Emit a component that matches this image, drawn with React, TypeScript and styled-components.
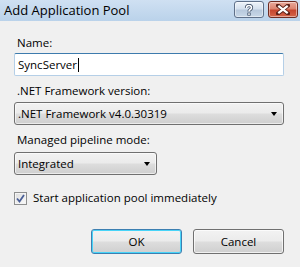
import React from "react";
import styled, { createGlobalStyle } from "styled-components";

const GlobalStyle = createGlobalStyle`
  html, body {
    margin: 0;
    padding: 0;
    background: #f0f0f0;
  }
  * {
    box-sizing: border-box;
  }
`;

const Window = styled.div`
  width: 300px;
  height: 267px;
  background: #f0f0f0;
  font-family: "Open Sans", "Noto Sans", sans-serif;
  font-size: 11.5px;
  color: #000;
  display: flex;
  flex-direction: column;
  overflow: hidden;
`;

const TitleBar = styled.div`
  height: 21px;
  flex: none;
  display: flex;
  align-items: flex-start;
  justify-content: space-between;
  padding: 1px 2px 0 4px;
  background: linear-gradient(#cfe0f2, #bad2ea);
`;

const Title = styled.div`
  font-size: 13px;
  line-height: 18px;
  color: #000;
`;

const Caption = styled.div`
  display: flex;
  gap: 4px;
`;

const CaptionButton = styled.div<{ $close?: boolean }>`
  width: 30px;
  height: 17px;
  border: 1px solid ${({ $close }) => ($close ? "#6e2b22" : "#5f7089")};
  border-radius: 3px;
  display: flex;
  align-items: center;
  justify-content: center;
  background: ${({ $close }) =>
    $close
      ? "linear-gradient(#e9a99b 0%, #dc8470 45%, #c6452e 55%, #d4654a 100%)"
      : "linear-gradient(#eef3f9 0%, #d5e1ee 45%, #b8c9dd 55%, #c9d8e8 100%)"};
  box-shadow: inset 0 0 0 1px rgba(255, 255, 255, 0.45);
`;

const Body = styled.div`
  display: flex;
  flex-direction: column;
  padding: 14px 16px 0 14px;
`;

const Label = styled.div<{ $gap?: number; $after?: number }>`
  line-height: 16px;
  padding-left: 3px;
  margin-top: ${({ $gap }) => $gap ?? 0}px;
  margin-bottom: ${({ $after }) => $after ?? 2}px;
`;

const TextBox = styled.div`
  height: 23px;
  width: 270px;
  background: #fff;
  border: 1px solid #b5cfe7;
  border-top-color: #3d7bad;
  border-radius: 2px;
  padding: 0 3px;
  display: flex;
  align-items: center;
  line-height: 16px;
`;

const Caret = styled.span`
  display: inline-block;
  width: 1px;
  height: 14px;
  background: #000;
  margin-left: 1px;
`;

const Select = styled.div<{ $width: number }>`
  height: 23px;
  width: ${({ $width }) => $width}px;
  border: 1px solid #707070;
  border-radius: 3px;
  display: flex;
  align-items: center;
  justify-content: space-between;
  padding: 0 6px 0 3px;
  line-height: 16px;
  background: linear-gradient(#f2f2f2 0%, #ebebeb 48%, #dddddd 52%, #cfcfcf 100%);
  box-shadow: inset 0 0 0 1px rgba(255, 255, 255, 0.6);
`;

const Arrow = styled.span`
  width: 0;
  height: 0;
  border-left: 3.5px solid transparent;
  border-right: 3.5px solid transparent;
  border-top: 4px solid #000;
`;

const CheckRow = styled.label`
  display: flex;
  align-items: center;
  gap: 6px;
  margin-top: 15px;
  line-height: 16px;
`;

const CheckBox = styled.span`
  width: 13px;
  height: 13px;
  border: 1px solid #8e8f8f;
  background: linear-gradient(135deg, #dcdcdc, #fbfbfb);
  display: flex;
  align-items: center;
  justify-content: center;
  box-shadow: inset 0 0 0 1px #f4f4f4;
`;

const Buttons = styled.div`
  display: flex;
  justify-content: flex-end;
  gap: 11px;
  margin-top: 23px;
`;

const Button = styled.div<{ $default?: boolean }>`
  width: 91px;
  height: 25px;
  border: 1px solid ${({ $default }) => ($default ? "#3c7fb1" : "#707070")};
  border-radius: 3px;
  display: flex;
  align-items: center;
  justify-content: center;
  line-height: 16px;
  background: linear-gradient(#f2f2f2 0%, #ebebeb 48%, #dddddd 52%, #cfcfcf 100%);
  box-shadow: ${({ $default }) =>
    $default ? "inset 0 0 0 1px #48d4f8" : "inset 0 0 0 1px rgba(255,255,255,0.7)"};
`;

const HelpGlyph = () => (
  <svg width="12" height="12" viewBox="0 0 12 12">
    <path
      d="M3.5 4 Q3.5 1.5 6 1.5 Q8.5 1.5 8.5 3.8 Q8.5 5 7 5.8 Q6 6.4 6 7.5"
      fill="none"
      stroke="#3e4e66"
      strokeWidth="3.2"
    />
    <path
      d="M3.5 4 Q3.5 1.5 6 1.5 Q8.5 1.5 8.5 3.8 Q8.5 5 7 5.8 Q6 6.4 6 7.5"
      fill="none"
      stroke="#fff"
      strokeWidth="1.6"
    />
    <rect x="4.4" y="8.6" width="3.2" height="3" fill="#3e4e66" />
    <rect x="5.2" y="9.3" width="1.6" height="1.6" fill="#fff" />
  </svg>
);

const CloseGlyph = () => (
  <svg width="14" height="11" viewBox="0 0 14 11">
    <path d="M2 1.5 L12 9.5 M12 1.5 L2 9.5" stroke="#5a2018" strokeWidth="4" strokeLinecap="square" />
    <path d="M2.3 1.8 L11.7 9.2 M11.7 1.8 L2.3 9.2" stroke="#fff" strokeWidth="2.2" />
  </svg>
);

const CheckMark = () => (
  <svg width="9" height="9" viewBox="0 0 9 9">
    <path d="M1 4.5 L3.5 7.5 L8 1" fill="none" stroke="#4a5f97" strokeWidth="1.8" />
  </svg>
);

export default function App() {
  return (
    <>
      <GlobalStyle />
      <Window>
        <TitleBar>
          <Title>Add Application Pool</Title>
          <Caption>
            <CaptionButton>
              <HelpGlyph />
            </CaptionButton>
            <CaptionButton $close>
              <CloseGlyph />
            </CaptionButton>
          </Caption>
        </TitleBar>
        <Body>
          <Label>Name:</Label>
          <TextBox>
            SyncServer
            <Caret />
          </TextBox>
          <Label $gap={7} $after={3}>.NET Framework version:</Label>
          <Select $width={270}>
            .NET Framework v4.0.30319
            <Arrow />
          </Select>
          <Label $gap={7} $after={4}>Managed pipeline mode:</Label>
          <Select $width={143}>
            Integrated
            <Arrow />
          </Select>
          <CheckRow>
            <CheckBox>
              <CheckMark />
            </CheckBox>
            Start application pool immediately
          </CheckRow>
          <Buttons>
            <Button $default>OK</Button>
            <Button>Cancel</Button>
          </Buttons>
        </Body>
      </Window>
    </>
  );
}
